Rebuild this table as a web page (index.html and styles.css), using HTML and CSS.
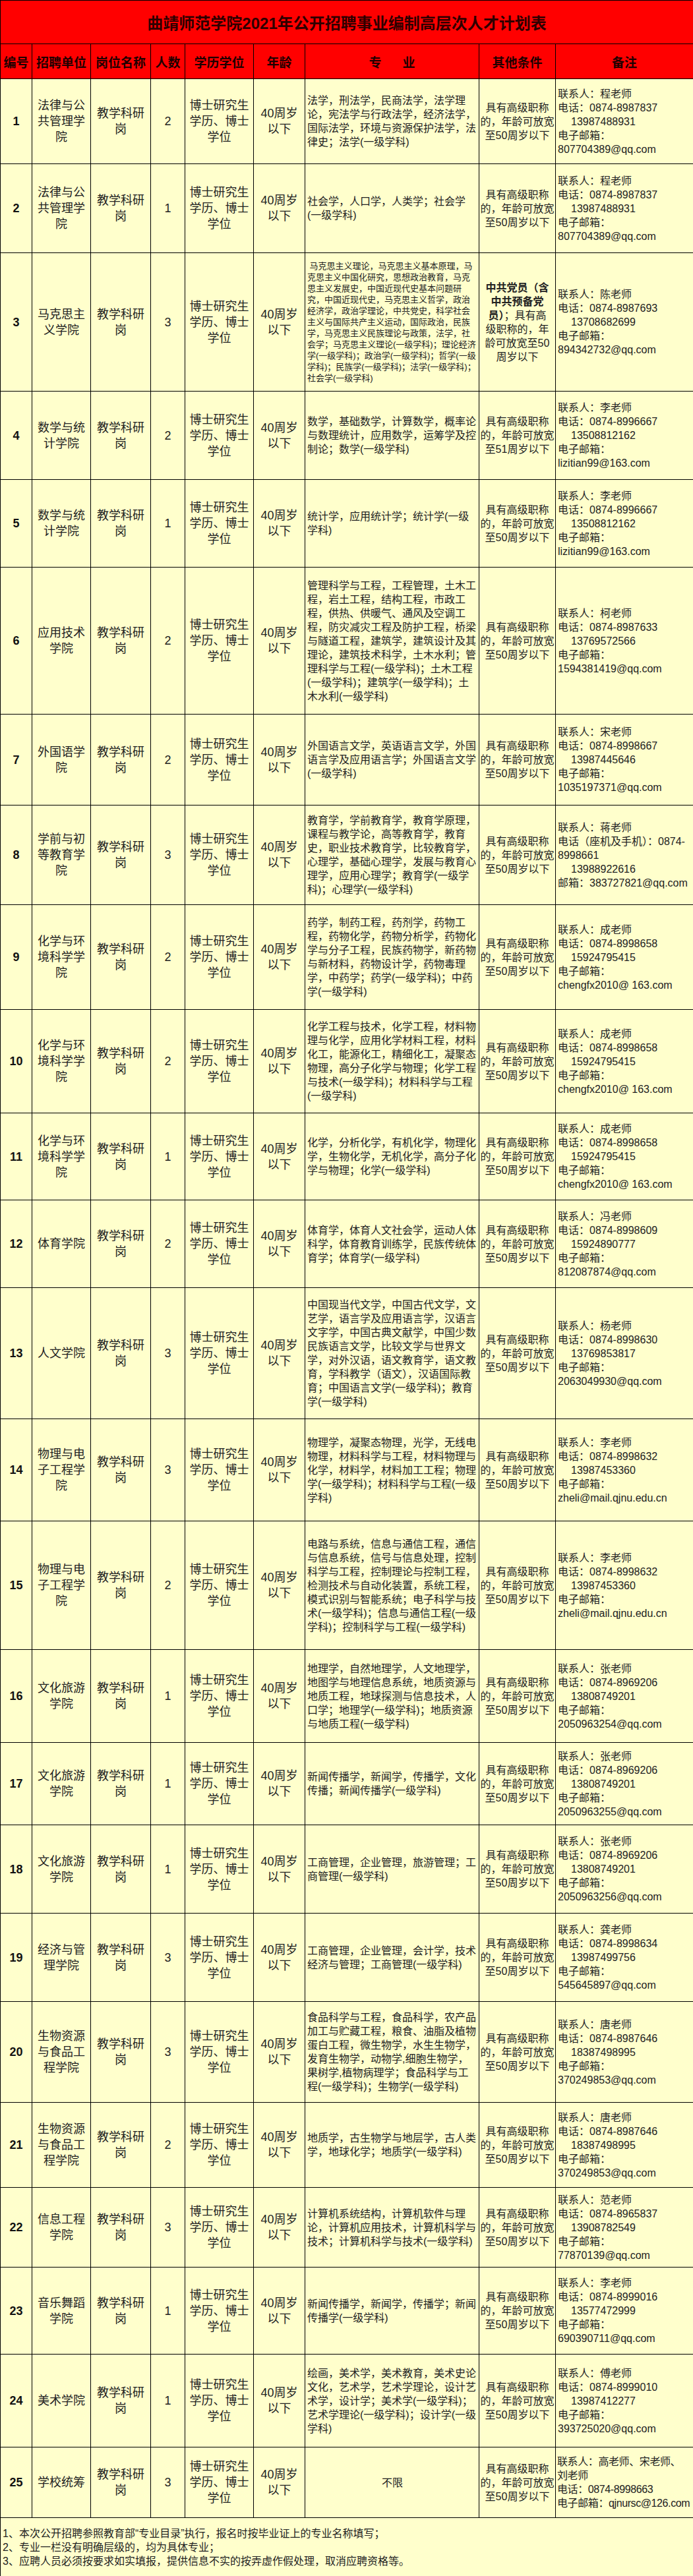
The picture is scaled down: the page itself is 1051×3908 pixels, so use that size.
FILE: index.html
```html
<!DOCTYPE html>
<html lang="zh-CN">
<head>
<meta charset="utf-8">
<title>曲靖师范学院2021年公开招聘事业编制高层次人才计划表</title>
<link rel="stylesheet" href="styles.css">
</head>
<body>
<table class="plan">
<colgroup>
<col class="c-no"><col class="c-unit"><col class="c-post"><col class="c-num"><col class="c-edu"><col class="c-age"><col class="c-major"><col class="c-cond"><col class="c-memo">
</colgroup>
<thead>
<tr class="title-row"><th colspan="9">曲靖师范学院2021年公开招聘事业编制高层次人才计划表</th></tr>
<tr class="head-row">
<th>编号</th><th>招聘单位</th><th>岗位名称</th><th>人数</th><th>学历学位</th><th>年龄</th><th>专<span class="gap"></span>业</th><th>其他条件</th><th>备注</th>
</tr>
</thead>
<tbody>
<tr>
<td class="no">1</td><td>法律与公共管理学院</td><td>教学科研岗</td><td>2</td><td>博士研究生学历、博士学位</td><td>40周岁<br>以下</td>
<td class="major">法学，刑法学，民商法学，法学理论，宪法学与行政法学，经济法学，国际法学，环境与资源保护法学，法律史；法学(一级学科)</td>
<td class="cond">具有高级职称<br>的，年龄可放宽<br>至50周岁以下</td>
<td class="memo">联系人：程老师<br>电话：0874-8987837<br><span class="ind">13987488931</span><br>电子邮箱：<br>807704389@qq.com</td>
</tr>
<tr>
<td class="no">2</td><td>法律与公共管理学院</td><td>教学科研岗</td><td>1</td><td>博士研究生学历、博士学位</td><td>40周岁<br>以下</td>
<td class="major">社会学，人口学，人类学；社会学(一级学科)</td>
<td class="cond">具有高级职称<br>的，年龄可放宽<br>至50周岁以下</td>
<td class="memo">联系人：程老师<br>电话：0874-8987837<br><span class="ind">13987488931</span><br>电子邮箱：<br>807704389@qq.com</td>
</tr>
<tr>
<td class="no">3</td><td>马克思主义学院</td><td>教学科研岗</td><td>3</td><td>博士研究生学历、博士学位</td><td>40周岁<br>以下</td>
<td class="major small">&nbsp;马克思主义理论，马克思主义基本原理，马克思主义中国化研究，思想政治教育，马克思主义发展史，中国近现代史基本问题研究，中国近现代史，马克思主义哲学，政治经济学，政治学理论，中共党史，科学社会主义与国际共产主义运动，国际政治，民族学，马克思主义民族理论与政策，法学，社会学；马克思主义理论(一级学科)；理论经济学(一级学科)；政治学(一级学科)；哲学(一级学科)；民族学(一级学科)；法学(一级学科)；社会学(一级学科)</td>
<td class="cond"><b>中共党员（含<br>中共预备党<br>员）</b>；具有高<br>级职称的，年<br>龄可放宽至50<br>周岁以下</td>
<td class="memo">联系人：陈老师<br>电话：0874-8987693<br><span class="ind">13708682699</span><br>电子邮箱：<br>894342732@qq.com</td>
</tr>
<tr>
<td class="no">4</td><td>数学与统计学院</td><td>教学科研岗</td><td>2</td><td>博士研究生学历、博士学位</td><td>40周岁<br>以下</td>
<td class="major">数学，基础数学，计算数学，概率论与数理统计，应用数学，运筹学及控制论；数学(一级学科)</td>
<td class="cond">具有高级职称<br>的，年龄可放宽<br>至51周岁以下</td>
<td class="memo">联系人：李老师<br>电话：0874-8996667<br><span class="ind">13508812162</span><br>电子邮箱：<br>lizitian99@163.com</td>
</tr>
<tr>
<td class="no">5</td><td>数学与统计学院</td><td>教学科研岗</td><td>1</td><td>博士研究生学历、博士学位</td><td>40周岁<br>以下</td>
<td class="major">统计学，应用统计学；统计学(一级学科)</td>
<td class="cond">具有高级职称<br>的，年龄可放宽<br>至50周岁以下</td>
<td class="memo">联系人：李老师<br>电话：0874-8996667<br><span class="ind">13508812162</span><br>电子邮箱：<br>lizitian99@163.com</td>
</tr>
<tr>
<td class="no">6</td><td>应用技术学院</td><td>教学科研岗</td><td>2</td><td>博士研究生学历、博士学位</td><td>40周岁<br>以下</td>
<td class="major">管理科学与工程，工程管理，土木工程，岩土工程，结构工程，市政工程，供热、供暖气、通风及空调工程，防灾减灾工程及防护工程，桥梁与隧道工程，建筑学，建筑设计及其理论，建筑技术科学，土木水利；管理科学与工程(一级学科)；土木工程(一级学科)；建筑学(一级学科)；土木水利(一级学科)</td>
<td class="cond">具有高级职称<br>的，年龄可放宽<br>至50周岁以下</td>
<td class="memo">联系人：柯老师<br>电话：0874-8987633<br><span class="ind">13769572566</span><br>电子邮箱：<br>1594381419@qq.com</td>
</tr>
<tr>
<td class="no">7</td><td>外国语学院</td><td>教学科研岗</td><td>2</td><td>博士研究生学历、博士学位</td><td>40周岁<br>以下</td>
<td class="major">外国语言文学，英语语言文学，外国语言学及应用语言学；外国语言文学(一级学科)</td>
<td class="cond">具有高级职称<br>的，年龄可放宽<br>至50周岁以下</td>
<td class="memo">联系人：宋老师<br>电话：0874-8998667<br><span class="ind">13987445646</span><br>电子邮箱：<br>1035197371@qq.com</td>
</tr>
<tr>
<td class="no">8</td><td>学前与初等教育学院</td><td>教学科研岗</td><td>3</td><td>博士研究生学历、博士学位</td><td>40周岁<br>以下</td>
<td class="major">教育学，学前教育学，教育学原理，课程与教学论，高等教育学，教育史，职业技术教育学，比较教育学，心理学，基础心理学，发展与教育心理学，应用心理学；教育学(一级学科)；心理学(一级学科)</td>
<td class="cond">具有高级职称<br>的，年龄可放宽<br>至50周岁以下</td>
<td class="memo">联系人：蒋老师<br>电话（座机及手机）：0874-<br>8998661<br><span class="ind">13988922616</span><br>邮箱：383727821@qq.com</td>
</tr>
<tr>
<td class="no">9</td><td>化学与环境科学学院</td><td>教学科研岗</td><td>2</td><td>博士研究生学历、博士学位</td><td>40周岁<br>以下</td>
<td class="major">药学，制药工程，药剂学，药物工程，药物化学，药物分析学，药物化学与分子工程，民族药物学，新药物与新材料，药物设计学，药物毒理学，中药学；药学(一级学科)；中药学(一级学科)</td>
<td class="cond">具有高级职称<br>的，年龄可放宽<br>至50周岁以下</td>
<td class="memo">联系人：成老师<br>电话：0874-8998658<br><span class="ind">15924795415</span><br>电子邮箱：<br>chengfx2010@ 163.com</td>
</tr>
<tr>
<td class="no">10</td><td>化学与环境科学学院</td><td>教学科研岗</td><td>2</td><td>博士研究生学历、博士学位</td><td>40周岁<br>以下</td>
<td class="major">化学工程与技术，化学工程，材料物理与化学，应用化学材料工程，材料化工，能源化工，精细化工，凝聚态物理，高分子化学与物理；化学工程与技术(一级学科)；材料科学与工程(一级学科)</td>
<td class="cond">具有高级职称<br>的，年龄可放宽<br>至50周岁以下</td>
<td class="memo">联系人：成老师<br>电话：0874-8998658<br><span class="ind">15924795415</span><br>电子邮箱：<br>chengfx2010@ 163.com</td>
</tr>
<tr>
<td class="no">11</td><td>化学与环境科学学院</td><td>教学科研岗</td><td>1</td><td>博士研究生学历、博士学位</td><td>40周岁<br>以下</td>
<td class="major">化学，分析化学，有机化学，物理化学，生物化学，无机化学，高分子化学与物理；化学(一级学科)</td>
<td class="cond">具有高级职称<br>的，年龄可放宽<br>至50周岁以下</td>
<td class="memo">联系人：成老师<br>电话：0874-8998658<br><span class="ind">15924795415</span><br>电子邮箱：<br>chengfx2010@ 163.com</td>
</tr>
<tr>
<td class="no">12</td><td>体育学院</td><td>教学科研岗</td><td>2</td><td>博士研究生学历、博士学位</td><td>40周岁<br>以下</td>
<td class="major">体育学，体育人文社会学，运动人体科学，体育教育训练学，民族传统体育学；体育学(一级学科)</td>
<td class="cond">具有高级职称<br>的，年龄可放宽<br>至50周岁以下</td>
<td class="memo">联系人：冯老师<br>电话：0874-8998609<br><span class="ind">15924890777</span><br>电子邮箱：<br>812087874@qq.com</td>
</tr>
<tr>
<td class="no">13</td><td>人文学院</td><td>教学科研岗</td><td>3</td><td>博士研究生学历、博士学位</td><td>40周岁<br>以下</td>
<td class="major">中国现当代文学，中国古代文学，文艺学，语言学及应用语言学，汉语言文字学，中国古典文献学，中国少数民族语言文学，比较文学与世界文学，对外汉语，语文教育学，语文教育，学科教学（语文），汉语国际教育；中国语言文学(一级学科)；教育学(一级学科)</td>
<td class="cond">具有高级职称<br>的，年龄可放宽<br>至50周岁以下</td>
<td class="memo">联系人：杨老师<br>电话：0874-8998630<br><span class="ind">13769853817</span><br>电子邮箱：<br>2063049930@qq.com</td>
</tr>
<tr>
<td class="no">14</td><td>物理与电子工程学院</td><td>教学科研岗</td><td>3</td><td>博士研究生学历、博士学位</td><td>40周岁<br>以下</td>
<td class="major">物理学，凝聚态物理，光学，无线电物理，材料科学与工程，材料物理与化学，材料学，材料加工工程；物理学(一级学科)；材料科学与工程(一级学科)</td>
<td class="cond">具有高级职称<br>的，年龄可放宽<br>至50周岁以下</td>
<td class="memo">联系人：李老师<br>电话：0874-8998632<br><span class="ind">13987453360</span><br>电子邮箱：<br>zheli@mail.qjnu.edu.cn</td>
</tr>
<tr>
<td class="no">15</td><td>物理与电子工程学院</td><td>教学科研岗</td><td>2</td><td>博士研究生学历、博士学位</td><td>40周岁<br>以下</td>
<td class="major">电路与系统，信息与通信工程，通信与信息系统，信号与信息处理，控制科学与工程，控制理论与控制工程，检测技术与自动化装置，系统工程，模式识别与智能系统；电子科学与技术(一级学科)；信息与通信工程(一级学科)；控制科学与工程(一级学科)</td>
<td class="cond">具有高级职称<br>的，年龄可放宽<br>至50周岁以下</td>
<td class="memo">联系人：李老师<br>电话：0874-8998632<br><span class="ind">13987453360</span><br>电子邮箱：<br>zheli@mail.qjnu.edu.cn</td>
</tr>
<tr>
<td class="no">16</td><td>文化旅游学院</td><td>教学科研岗</td><td>1</td><td>博士研究生学历、博士学位</td><td>40周岁<br>以下</td>
<td class="major">地理学，自然地理学，人文地理学，地图学与地理信息系统，地质资源与地质工程，地球探测与信息技术，人口学；地理学(一级学科)；地质资源与地质工程(一级学科)</td>
<td class="cond">具有高级职称<br>的，年龄可放宽<br>至50周岁以下</td>
<td class="memo">联系人：张老师<br>电话：0874-8969206<br><span class="ind">13808749201</span><br>电子邮箱：<br>2050963254@qq.com</td>
</tr>
<tr>
<td class="no">17</td><td>文化旅游学院</td><td>教学科研岗</td><td>1</td><td>博士研究生学历、博士学位</td><td>40周岁<br>以下</td>
<td class="major">新闻传播学，新闻学，传播学，文化传播；新闻传播学(一级学科)</td>
<td class="cond">具有高级职称<br>的，年龄可放宽<br>至50周岁以下</td>
<td class="memo">联系人：张老师<br>电话：0874-8969206<br><span class="ind">13808749201</span><br>电子邮箱：<br>2050963255@qq.com</td>
</tr>
<tr>
<td class="no">18</td><td>文化旅游学院</td><td>教学科研岗</td><td>1</td><td>博士研究生学历、博士学位</td><td>40周岁<br>以下</td>
<td class="major">工商管理，企业管理，旅游管理；工商管理(一级学科)</td>
<td class="cond">具有高级职称<br>的，年龄可放宽<br>至50周岁以下</td>
<td class="memo">联系人：张老师<br>电话：0874-8969206<br><span class="ind">13808749201</span><br>电子邮箱：<br>2050963256@qq.com</td>
</tr>
<tr>
<td class="no">19</td><td>经济与管理学院</td><td>教学科研岗</td><td>3</td><td>博士研究生学历、博士学位</td><td>40周岁<br>以下</td>
<td class="major">工商管理，企业管理，会计学，技术经济与管理；工商管理(一级学科)</td>
<td class="cond">具有高级职称<br>的，年龄可放宽<br>至50周岁以下</td>
<td class="memo">联系人：龚老师<br>电话：0874-8998634<br><span class="ind">13987499756</span><br>电子邮箱：<br>545645897@qq.com</td>
</tr>
<tr>
<td class="no">20</td><td>生物资源与食品工程学院</td><td>教学科研岗</td><td>3</td><td>博士研究生学历、博士学位</td><td>40周岁<br>以下</td>
<td class="major">食品科学与工程，食品科学，农产品加工与贮藏工程，粮食、油脂及植物蛋白工程，微生物学，水生生物学，发育生物学，动物学,细胞生物学，果树学,植物病理学；食品科学与工程(一级学科)；生物学(一级学科)</td>
<td class="cond">具有高级职称<br>的，年龄可放宽<br>至50周岁以下</td>
<td class="memo">联系人：唐老师<br>电话：0874-8987646<br><span class="ind">18387498995</span><br>电子邮箱：<br>370249853@qq.com</td>
</tr>
<tr>
<td class="no">21</td><td>生物资源与食品工程学院</td><td>教学科研岗</td><td>2</td><td>博士研究生学历、博士学位</td><td>40周岁<br>以下</td>
<td class="major">地质学，古生物学与地层学，古人类学，地球化学；地质学(一级学科)</td>
<td class="cond">具有高级职称<br>的，年龄可放宽<br>至50周岁以下</td>
<td class="memo">联系人：唐老师<br>电话：0874-8987646<br><span class="ind">18387498995</span><br>电子邮箱：<br>370249853@qq.com</td>
</tr>
<tr>
<td class="no">22</td><td>信息工程学院</td><td>教学科研岗</td><td>3</td><td>博士研究生学历、博士学位</td><td>40周岁<br>以下</td>
<td class="major">计算机系统结构，计算机软件与理论，计算机应用技术，计算机科学与技术；计算机科学与技术(一级学科)</td>
<td class="cond">具有高级职称<br>的，年龄可放宽<br>至50周岁以下</td>
<td class="memo">联系人：范老师<br>电话：0874-8965837<br><span class="ind">13908782549</span><br>电子邮箱：<br>77870139@qq.com</td>
</tr>
<tr>
<td class="no">23</td><td>音乐舞蹈学院</td><td>教学科研岗</td><td>1</td><td>博士研究生学历、博士学位</td><td>40周岁<br>以下</td>
<td class="major">新闻传播学，新闻学，传播学；新闻传播学(一级学科)</td>
<td class="cond">具有高级职称<br>的，年龄可放宽<br>至50周岁以下</td>
<td class="memo">联系人：李老师<br>电话：0874-8999016<br><span class="ind">13577472999</span><br>电子邮箱：<br>690390711@qq.com</td>
</tr>
<tr>
<td class="no">24</td><td>美术学院</td><td>教学科研岗</td><td>1</td><td>博士研究生学历、博士学位</td><td>40周岁<br>以下</td>
<td class="major">绘画，美术学，美术教育，美术史论文化，艺术学，艺术学理论，设计艺术学，设计学；美术学(一级学科)；艺术学理论(一级学科)；设计学(一级学科)</td>
<td class="cond">具有高级职称<br>的，年龄可放宽<br>至50周岁以下</td>
<td class="memo">联系人：傅老师<br>电话：0874-8999010<br><span class="ind">13987412277</span><br>电子邮箱：<br>393725020@qq.com</td>
</tr>
<tr>
<td class="no">25</td><td>学校统筹</td><td>教学科研岗</td><td>3</td><td>博士研究生学历、博士学位</td><td>40周岁<br>以下</td>
<td class="major center">不限</td>
<td class="cond">具有高级职称<br>的，年龄可放宽<br>至50周岁以下</td>
<td class="memo tight">联系人：高老师、宋老师、<br>刘老师<br>电话：0874-8998663<br>电子邮箱：qjnursc@126.com</td>
</tr>
</tbody>
<tfoot>
<tr class="notes">
<td colspan="9">1、本次公开招聘参照教育部“专业目录”执行，报名时按毕业证上的专业名称填写；<br>2、专业一栏没有明确层级的，均为具体专业；<br>3、应聘人员必须按要求如实填报，提供信息不实的按弄虚作假处理，取消应聘资格等。</td>
</tr>
</tfoot>
</table>
</body>
</html>
```

FILE: styles.css
```css
* {
  box-sizing: border-box;
}

body {
  margin: 0;
  background: #ffffff;
  font-family: "Liberation Sans", "Noto Sans CJK SC", sans-serif;
  color: #222222;
}

.plan {
  border-collapse: collapse;
  table-layout: fixed;
  width: 1051px;
}

.c-no { width: 48px; }
.c-unit { width: 89px; }
.c-post { width: 91px; }
.c-num { width: 52px; }
.c-edu { width: 104px; }
.c-age { width: 78px; }
.c-major { width: 264px; }
.c-cond { width: 116px; }
.c-memo { width: 209px; }

.plan th,
.plan td {
  border: 1px solid #000000;
  padding: 0 2px;
  text-align: center;
  vertical-align: middle;
  overflow: hidden;
}

.title-row th {
  background: #ff0000;
  height: 66px;
  font-size: 24px;
  font-weight: bold;
  color: #2e0000;
}

.head-row th {
  background: #ff0000;
  height: 53px;
  font-size: 19px;
  font-weight: bold;
  color: #1e0000;
}

.gap {
  display: inline-block;
  width: 32px;
}

.plan tbody td,
.plan tfoot td {
  background: #ffffcc;
  font-size: 18px;
  line-height: 24px;
}

.plan tbody td.no {
  font-weight: bold;
  color: #111111;
}

.plan tbody td.major {
  text-align: left;
  font-size: 16px;
  line-height: 21px;
  padding: 0 2px 0 3px;
}

.plan tbody td.major.small {
  font-size: 13px;
  line-height: 17px;
}

.plan tbody td.major.center {
  text-align: center;
}

.plan tbody td.cond {
  font-size: 16px;
  line-height: 21px;
  white-space: nowrap;
  padding: 0;
}

.plan tbody td.memo {
  text-align: left;
  font-size: 16px;
  line-height: 21px;
  white-space: nowrap;
  padding: 0 0 0 3px;
}

.plan tbody td.memo.tight {
  padding-left: 2px;
  letter-spacing: -0.4px;
}

.ind {
  display: inline-block;
  padding-left: 20px;
}

.plan tfoot .notes td {
  text-align: left;
  font-size: 16px;
  line-height: 21px;
  height: 89px;
  padding: 0 3px;
}

.plan tbody tr:nth-child(1) { height: 129px; }
.plan tbody tr:nth-child(2) { height: 135px; }
.plan tbody tr:nth-child(3) { height: 210px; }
.plan tbody tr:nth-child(4) { height: 134px; }
.plan tbody tr:nth-child(5) { height: 133px; }
.plan tbody tr:nth-child(6) { height: 223px; }
.plan tbody tr:nth-child(7) { height: 138px; }
.plan tbody tr:nth-child(8) { height: 151px; }
.plan tbody tr:nth-child(9) { height: 159px; }
.plan tbody tr:nth-child(10) { height: 157px; }
.plan tbody tr:nth-child(11) { height: 132px; }
.plan tbody tr:nth-child(12) { height: 133px; }
.plan tbody tr:nth-child(13) { height: 199px; }
.plan tbody tr:nth-child(14) { height: 155px; }
.plan tbody tr:nth-child(15) { height: 195px; }
.plan tbody tr:nth-child(16) { height: 141px; }
.plan tbody tr:nth-child(17) { height: 125px; }
.plan tbody tr:nth-child(18) { height: 134px; }
.plan tbody tr:nth-child(19) { height: 134px; }
.plan tbody tr:nth-child(20) { height: 153px; }
.plan tbody tr:nth-child(21) { height: 129px; }
.plan tbody tr:nth-child(22) { height: 121px; }
.plan tbody tr:nth-child(23) { height: 132px; }
.plan tbody tr:nth-child(24) { height: 141px; }
.plan tbody tr:nth-child(25) { height: 107px; }
```
